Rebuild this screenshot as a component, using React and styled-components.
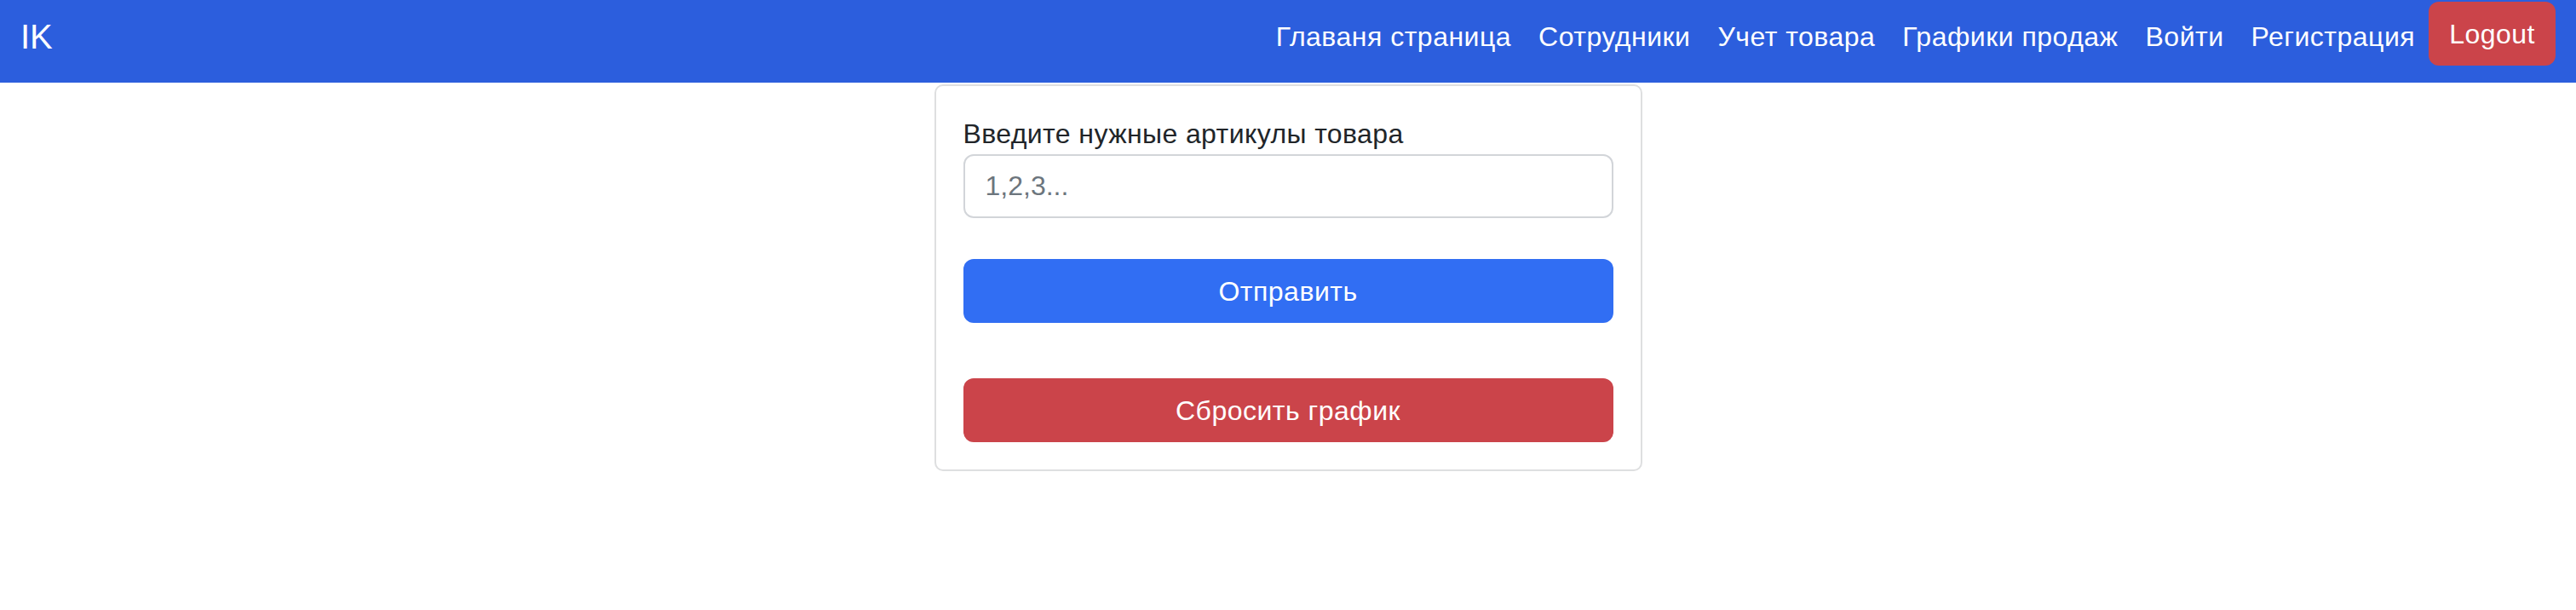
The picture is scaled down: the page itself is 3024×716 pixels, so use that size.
import React, { useState } from 'react';
import styled, { createGlobalStyle } from 'styled-components';

const GlobalStyle = createGlobalStyle`
  body {
    margin: 0;
    background: #fff;
    font-family: "Liberation Sans", Arial, sans-serif;
  }
  * {
    box-sizing: border-box;
  }
`;

const Navbar = styled.nav`
  display: flex;
  justify-content: space-between;
  align-items: flex-start;
  height: 97px;
  padding: 2px 24px 0 24px;
  background-color: #2c5edd;
`;

const Brand = styled.a`
  padding: 11px 0;
  font-size: 40px;
  line-height: 60px;
  color: #fff;
  text-decoration: none;
`;

const NavList = styled.div`
  display: flex;
  align-items: flex-start;
  letter-spacing: 0.5px;
`;

const NavLink = styled.a`
  padding: 17px 16px;
  font-size: 32px;
  line-height: 48px;
  color: #fff;
  text-decoration: none;
  cursor: pointer;
`;

const Button = styled.button`
  display: block;
  width: ${(p) => (p.$block ? '100%' : 'auto')};
  height: 75px;
  margin-top: ${(p) => p.$mt || 0}px;
  padding: 0 ${(p) => (p.$block ? 0 : 24)}px;
  border: none;
  border-radius: 12px;
  background-color: ${(p) => (p.$variant === 'danger' ? '#cb444a' : '#316ef3')};
  color: #fff;
  font-family: inherit;
  font-size: 32px;
  line-height: 48px;
  letter-spacing: 0.5px;
  cursor: pointer;
`;

const Card = styled.div`
  width: 831px;
  margin: 2px auto 0;
  padding: 32px;
  border: 2px solid #dedfe0;
  border-radius: 10px;
`;

const Label = styled.label`
  display: block;
  font-size: 32px;
  line-height: 48px;
  letter-spacing: 0.4px;
  color: #212529;
`;

const Input = styled.input`
  display: block;
  width: 100%;
  height: 75px;
  padding: 0 24px;
  border: 2px solid #d2d5d9;
  border-radius: 12px;
  font-family: inherit;
  font-size: 32px;
  color: #212529;
  &::placeholder {
    color: #6c757d;
  }
  &:focus {
    outline: none;
  }
`;

function App() {
    const [articles, setArticles] = useState('');

    const handleSubmit = (e) => {
        e.preventDefault();
    };

    return (
        <>
            <GlobalStyle />
            <Navbar>
                <Brand>IK</Brand>
                <NavList>
                    <NavLink>Главаня страница</NavLink>
                    <NavLink>Сотрудники</NavLink>
                    <NavLink>Учет товара</NavLink>
                    <NavLink>Графики продаж</NavLink>
                    <NavLink>Войти</NavLink>
                    <NavLink>Регистрация</NavLink>
                    <Button $variant="danger">Logout</Button>
                </NavList>
            </Navbar>
            <Card>
                <form onSubmit={handleSubmit}>
                    <Label htmlFor="articles">Введите нужные артикулы товара</Label>
                    <Input
                        id="articles"
                        placeholder="1,2,3..."
                        value={articles}
                        onChange={(e) => setArticles(e.target.value)}
                    />
                    <Button type="submit" $block $mt={48}>Отправить</Button>
                </form>
                <Button type="button" $block $variant="danger" $mt={65} onClick={() => setArticles('')}>
                    Сбросить график
                </Button>
            </Card>
        </>
    );
}

export default App;
